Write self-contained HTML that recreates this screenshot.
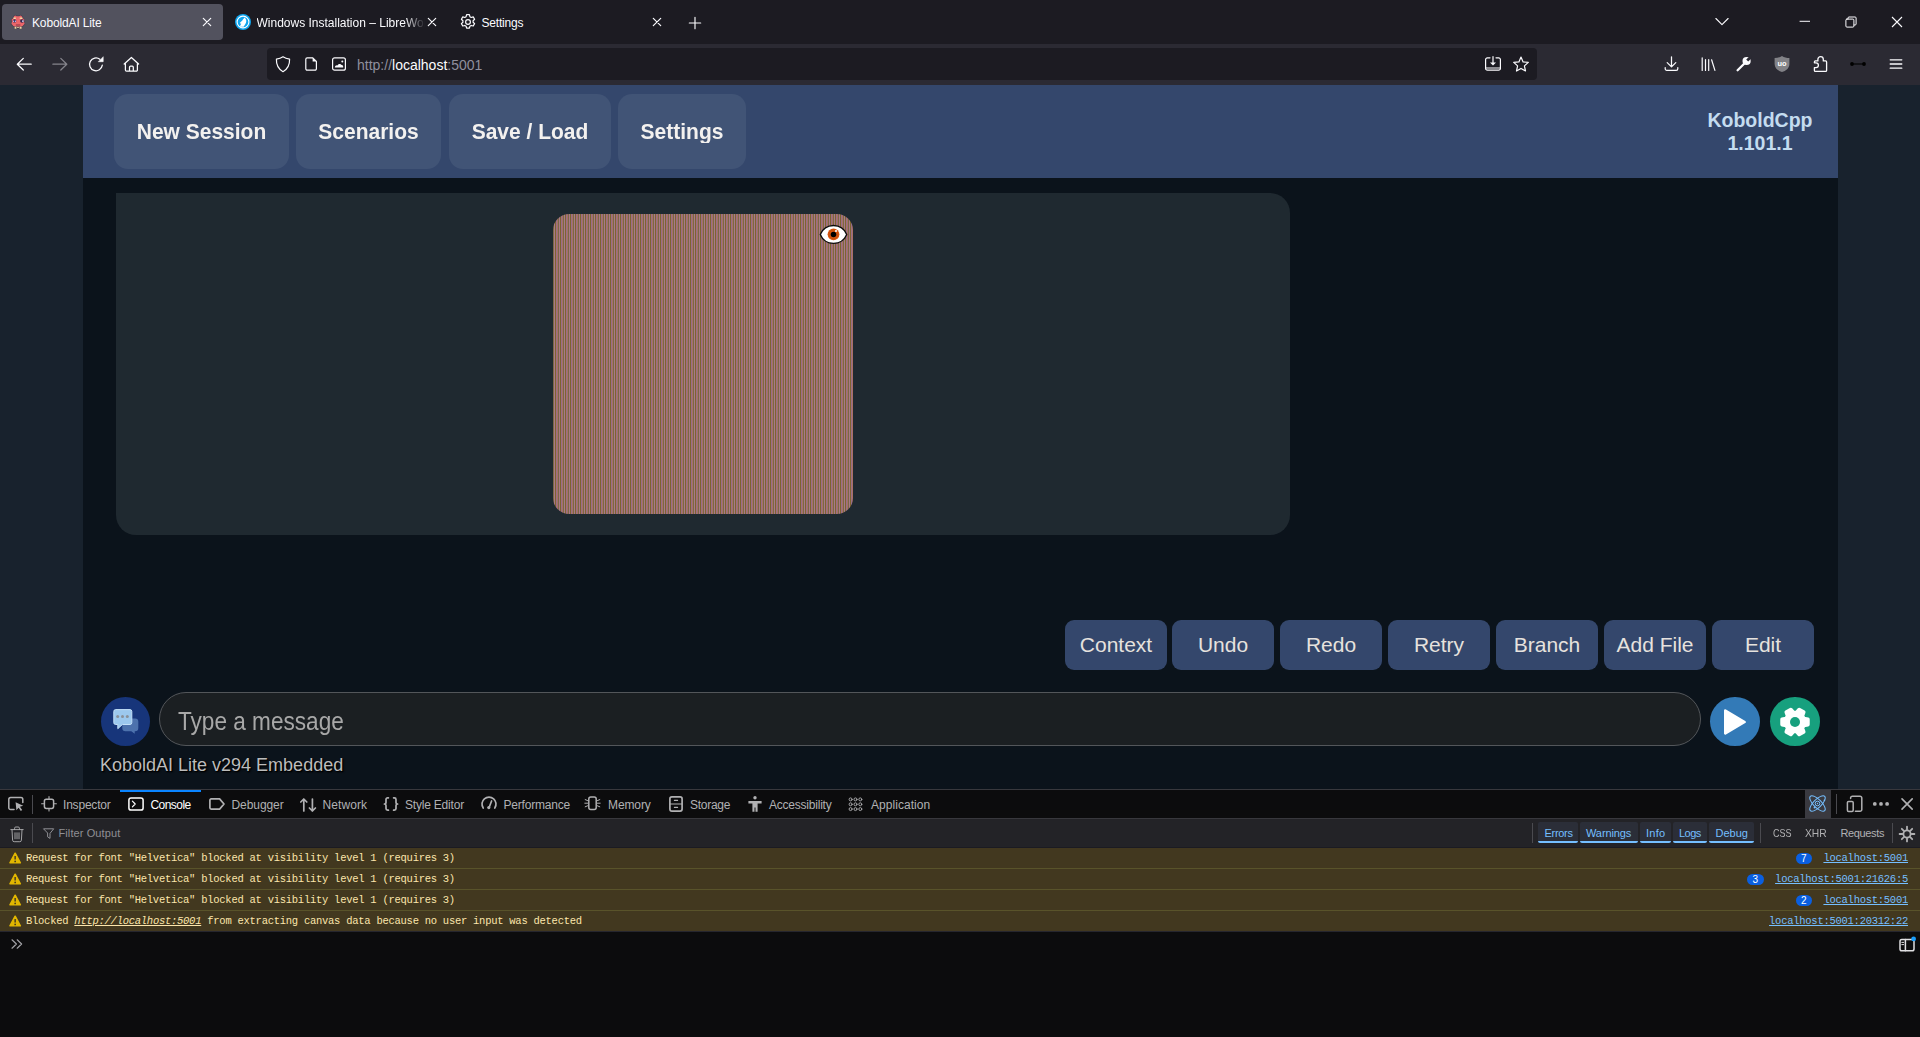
<!DOCTYPE html>
<html lang="en">
<head>
<meta charset="utf-8">
<title>KoboldAI Lite</title>
<style>
*{box-sizing:border-box;margin:0;padding:0}
html,body{width:1920px;height:1037px;overflow:hidden;background:#0c0c0d}
body{position:relative;font-family:"Liberation Sans",sans-serif;color:#fbfbfe}
.abs{position:absolute}
svg{display:block;position:absolute;overflow:visible}
/* ---------- browser chrome ---------- */
#tabbar{left:0;top:0;width:1920px;height:44px;background:#1c1b22}
#navbar{left:0;top:44px;width:1920px;height:41px;background:#2b2a33}
.tab{position:absolute;top:4px;height:36px;border-radius:4px}
.tab.sel{left:2px;width:221px;background:#52525e}
.tabtxt{position:absolute;top:1px;height:44px;line-height:44px;font-size:12px;color:#fbfbfe;white-space:nowrap}
#urlbar{left:267px;top:48px;width:1270px;height:32px;border-radius:4px;background:#1c1b22}
#urltxt{left:357px;top:49px;height:32px;line-height:32px;font-size:14px;color:#8f8f9d;white-space:nowrap}
#urltxt b{font-weight:normal;color:#fbfbfe}
.ic{fill:none;stroke:#fbfbfe;stroke-width:1.25;stroke-linecap:round;stroke-linejoin:round}
.icf{fill:#fbfbfe;stroke:none}
/* ---------- page ---------- */
#page{left:0;top:85px;width:1920px;height:704px;background:#18222d}
#main{left:83px;top:0;width:1755px;height:704px;background:#0b131b}
#topnav{left:0;top:0;width:1755px;height:93px;background:#34476c}
.nbtn{position:absolute;top:9px;height:75px;border-radius:14px;background:#415476;color:#f3f1ef;font-weight:bold;font-size:21px;line-height:74.6px;text-align:center;white-space:nowrap}
.nbtn span{display:block;transform:scaleY(1.08)}
#ver{left:1577px;top:24px;width:200px;text-align:center;font-weight:bold;font-size:19.5px;line-height:23px;color:#c4dcf0}
#chat{left:33px;top:108px;width:1174px;height:342px;border-radius:0 20px 20px 20px;background:#1f2930}
#pic{left:470px;top:129px;width:300px;height:300px;border-radius:16px;background:#946e62 repeating-linear-gradient(90deg,#786848 0,#786848 1px,#aa7a86 1px,#aa7a86 2px,#80622f 2px,#80622f 3px,#987089 3px,#987089 4px,#aa7064 4px,#aa7064 5px)}
.abtn{position:absolute;top:535px;width:102px;height:50px;border-radius:9px;background:#34476c;color:#e6e2de;font-size:21px;line-height:50px;text-align:center;white-space:nowrap}
#inp{left:76px;top:607px;width:1542px;height:54px;border-radius:27px;background:#1b1f22;border:1px solid #53565a}
#ph{left:95px;top:607px;height:60px;line-height:60px;font-size:22.6px;color:#a8a8a8;transform:scaleY(1.13);white-space:nowrap}
.circ{position:absolute;width:50px;height:49.4px;border-radius:50%;margin-top:.7px}
#foot{left:17px;top:668px;font-size:18px;line-height:24px;color:#bcbcbc;text-shadow:1px 1px 1px #000,1px 1px 2px #000;white-space:nowrap}
/* ---------- devtools ---------- */
#dt{left:0;top:789px;width:1920px;height:248px;background:#0c0c0d}
#dttop{left:0;top:0;width:1920px;height:1px;background:#38383d}
#dtbar{left:0;top:1px;width:1920px;height:29px;background:#0c0c0d;border-bottom:1px solid #38383d}
#dtsel{left:120px;top:1px;width:81px;height:2px;background:#0a84ff}
#dtfilter{left:0;top:30px;width:1920px;height:29px;background:#232327;border-bottom:1px solid #1b1b22}
.dtt{position:absolute;top:2px;height:28px;line-height:28px;font-size:12px;color:#b1b1b3;white-space:nowrap}
.dti{fill:none;stroke:#b1b1b3;stroke-width:1.5;stroke-linecap:round;stroke-linejoin:round}
.dtf{fill:#b1b1b3;stroke:none}
.sep{position:absolute;width:1px;background:#4a4a4f}
.row{position:absolute;left:0;width:1920px;height:21px;background:#42381f;border-bottom:1px solid #59532a}
.msg{position:absolute;left:26px;top:0;height:20px;line-height:20px;font-family:"Liberation Mono",monospace;font-size:10.5px;letter-spacing:-.26px;color:#fce6ac;white-space:nowrap}
.loc{position:absolute;right:12px;top:0;height:20px;line-height:20px;font-family:"Liberation Mono",monospace;font-size:10.5px;letter-spacing:-.26px;color:#75bfff;text-decoration:underline;white-space:nowrap}
.badge{position:absolute;top:5px;height:11px;width:15.5px;border-radius:6px;background:#0a5fe0;color:#fff;font-family:"Liberation Sans",sans-serif;font-size:10px;line-height:12px;text-align:center}
.fl{position:absolute;top:30px;height:28px;line-height:28px;font-size:11px;color:#b1b1b3;white-space:nowrap}
.fb{position:absolute;top:33px;height:21px;border-radius:2px;background:#2b2e38;border-bottom:2px solid #75bfff}
.fl.on{color:#75bfff}
.warn{position:absolute;left:9px;top:4px}
</style>
</head>
<body>
<div id="tabbar" class="abs">
  <div class="tab sel"></div>
  <div class="tabtxt" style="left:32px;letter-spacing:-.14px">KoboldAI Lite</div>
  <div class="tabtxt" style="left:256.5px;width:168px;overflow:hidden;-webkit-mask-image:linear-gradient(90deg,#000 88%,transparent 100%);mask-image:linear-gradient(90deg,#000 88%,transparent 100%)">Windows Installation – LibreWolf</div>
  <div class="tabtxt" style="left:481.5px;letter-spacing:-.21px">Settings</div>
</div>
<div id="navbar" class="abs"></div>
<div id="urlbar" class="abs"></div>
<div id="urltxt" class="abs">http://<b>localhost</b>:5001</div>


<!-- tab 1 favicon (kobold face) -->
<svg style="left:10px;top:14px" width="16" height="16" viewBox="0 0 16 16">
  <path d="M3.6 1.8 L5.2 .8 L6.6 1.6 H9 L10.6 .8 L12.2 1.8 L12.8 3.6 L15 5.2 L14.6 7.6 L15.2 10 L13 12.6 L11.8 12.8 L11.6 15 H4.2 L4 12.8 L2.8 12.6 L.8 10 L1.4 7.6 L1 5.2 L3 3.6Z" fill="#3a3446" opacity=".55"/>
  <path d="M4 2.2 L5.2 1.4 L6.6 2.2 H9.2 L10.6 1.4 L11.8 2.2 L12.4 4 L14.4 5.4 L14 7.6 L14.6 9.8 L12.6 12 L11 12.4 H5 L3.4 12 L1.4 9.8 L2 7.6 L1.6 5.4 L3.6 4Z" fill="#ec666a"/>
  <path d="M3.4 3.4 H5.8 L6 4.8 L3.6 5.2Z M9.8 3.4 H12.4 L12.2 5.2 L9.6 4.8Z" fill="#f6d8a4"/>
  <ellipse cx="4.5" cy="6.9" rx="1.8" ry="1.6" fill="#2e2552"/><ellipse cx="12" cy="7" rx="1.9" ry="1.7" fill="#2e2552"/>
  <path d="M3 6.6 h1.2 v1.4 h-1.2z M5 6.6 h1 v1.4 h-1z" fill="#b4b2e6"/><path d="M12.2 6.2 h1.4 v1.8 h-1.4z" fill="#d6d4f2"/>
  <path d="M5.8 10 H10.4 V12.2 H5.8Z" fill="#b84c56"/>
  <path d="M4.6 12.8 H6.4 V14.8 H4.6Z M9.6 12.8 H11.6 V14.8 H9.6Z M7 13.2 H9 V14 H7Z" fill="#f1d3a2"/>
</svg>
<!-- tab close buttons -->
<svg class="ic" style="left:203px;top:18px;stroke-width:1.2" width="8" height="8" viewBox="0 0 8 8"><path d="M.3 .3 L7.7 7.7 M7.7 .3 L.3 7.7"/></svg>
<svg class="ic" style="left:428px;top:18px;stroke-width:1.2" width="8" height="8" viewBox="0 0 8 8"><path d="M.3 .3 L7.7 7.7 M7.7 .3 L.3 7.7"/></svg>
<svg class="ic" style="left:653px;top:18px;stroke-width:1.2" width="8" height="8" viewBox="0 0 8 8"><path d="M.3 .3 L7.7 7.7 M7.7 .3 L.3 7.7"/></svg>
<!-- librewolf favicon -->
<svg style="left:235px;top:14px" width="16" height="16" viewBox="0 0 16 16">
  <circle cx="8" cy="8" r="8" fill="#10a5ee"/>
  <circle cx="8" cy="8" r="5.9" fill="none" stroke="#fff" stroke-width="1.1"/>
  <path d="M9.6 3.4 L10.8 5 C11.6 6.4 11.4 8.6 10.2 10.2 L8.6 12.8 H4.9 C5.2 11.6 5.6 10.6 6.3 9.8 C5.6 9.7 5.1 9.5 4.7 9.1 L7.3 6.6 C7.9 5.2 8.6 4.2 9.6 3.4Z" fill="#fff"/>
</svg>
<!-- settings tab gear -->
<svg class="ic" style="left:460px;top:14px;stroke-width:1.2" width="16" height="16" viewBox="0 0 16 16">
  <path d="M6.6 .7 h2.8 l.5 2 l1.3 .75 l2 -.6 l1.4 2.4 l-1.5 1.45 v1.5 l1.5 1.45 l-1.4 2.4 l-2 -.6 l-1.3 .75 l-.5 2 h-2.8 l-.5 -2 l-1.3 -.75 l-2 .6 l-1.4 -2.4 l1.5 -1.45 v-1.5 l-1.5 -1.45 l1.4 -2.4 l2 .6 l1.3 -.75z"/>
  <circle cx="8" cy="8" r="2.4"/>
</svg>
<!-- new tab plus -->
<svg class="ic" style="left:689px;top:17px;stroke-width:1.15" width="12" height="12" viewBox="0 0 12 12"><path d="M6 .3 V11.7 M.3 6 H11.7"/></svg>
<!-- window controls -->
<svg class="ic" style="left:1715px;top:17px;stroke-width:1.1" width="14" height="9" viewBox="0 0 14 9"><path d="M.9 1.5 L7 7.6 L13.1 1.5"/></svg>
<svg class="ic" style="left:1799px;top:20px;stroke-width:1;stroke-linecap:butt" width="12" height="2" viewBox="0 0 12 2"><path d="M.6 1.3 H11"/></svg>
<svg class="ic" style="left:1845px;top:16px;stroke-width:1" width="12" height="12" viewBox="0 0 12 12"><rect x=".9" y="3.1" width="8" height="8" rx="1"/><path d="M3 3 V2 a1 1 0 0 1 1 -1 h6.1 a1 1 0 0 1 1 1 v6 a1 1 0 0 1 -1 1 h-1"/></svg>
<svg class="ic" style="left:1891px;top:16px;stroke-width:1.1;stroke-linecap:butt" width="12" height="12" viewBox="0 0 12 12"><path d="M1 1 L11 11 M11 1 L1 11"/></svg>
<!-- nav buttons -->
<svg class="ic" style="left:16px;top:56px" width="16" height="16" viewBox="0 0 16 16"><path d="M15.2 8.2 H1.4 M7.3 2.4 L1.3 8.2 L7.3 14"/></svg>
<svg class="ic" style="left:52px;top:56px;stroke:#85848c" width="16" height="16" viewBox="0 0 16 16"><path d="M.9 8.2 H14.7 M8.8 2.4 L14.8 8.2 L8.8 14"/></svg>
<svg class="ic" style="left:88px;top:56px" width="16" height="16" viewBox="0 0 16 16"><path d="M14.3 9.2 A6.4 6.4 0 1 1 11.9 3.3"/><path class="icf" d="M15.2 1.1 V5.7 H10.6z" style="stroke:#fbfbfe;stroke-width:.6"/></svg>
<svg class="ic" style="left:123px;top:56px" width="17" height="16" viewBox="0 0 17 16"><path d="M1.2 8 L8.4 1.5 L15.6 8 M2.4 7.4 V14 a1.2 1.2 0 0 0 1.2 1.2 H13.2 a1.2 1.2 0 0 0 1.2 -1.2 V7.4 M6.5 15 V11.2 a1 1 0 0 1 1 -1 h1.8 a1 1 0 0 1 1 1 V15"/></svg>
<!-- urlbar icons -->
<svg class="ic" style="left:275px;top:56px;stroke-width:1.2" width="16" height="17" viewBox="0 0 16 17"><path d="M8 .8 C6 2.3 3.6 2.9 1.4 3.1 C1.2 8.6 3 13 8 15.7 C13 13 14.8 8.6 14.6 3.1 C12.4 2.9 10 2.3 8 .8Z"/></svg>
<svg class="ic" style="left:304px;top:56px;stroke-width:1.2" width="14" height="16" viewBox="0 0 14 16"><path d="M3.2 1.8 H8.8 L12.4 5.4 V12.8 a1.4 1.4 0 0 1 -1.4 1.4 H3.2 a1.4 1.4 0 0 1 -1.4 -1.4 V3.2 a1.4 1.4 0 0 1 1.4 -1.4z"/><path class="icf" d="M8.6 1.8 V5.6 H12.4z"/></svg>
<svg class="ic" style="left:331px;top:56px;stroke-width:1.2" width="16" height="16" viewBox="0 0 16 16"><rect x="1.6" y="1.8" width="12.8" height="12.4" rx="2"/><path class="icf" d="M3.8 11.6 C4 9.6 5.4 8.8 6.6 9.4 C7.4 7.6 9.6 7.4 10.6 9 C11.8 8.8 12.4 10 12.2 11.6z"/><circle class="icf" cx="11.3" cy="5.4" r="1"/></svg>
<svg class="ic" style="left:1485px;top:56px;stroke-width:1.2" width="16" height="16" viewBox="0 0 16 16"><path d="M5 1.8 H2.4 a1.8 1.8 0 0 0 -1.8 1.8 V12.4 a1.8 1.8 0 0 0 1.8 1.8 H13.6 a1.8 1.8 0 0 0 1.8 -1.8 V3.6 a1.8 1.8 0 0 0 -1.8 -1.8 H11 M.6 12 H15.4 M8 .6 V7"/><path class="icf" d="M5 6.4 H11 L8 9.4z"/></svg>
<svg class="ic" style="left:1513px;top:56px;stroke-width:1.2" width="16" height="17" viewBox="0 0 16 17"><path d="M8 1.1 L10.1 5.9 L15.3 6.4 L11.4 9.9 L12.5 15 L8 12.4 L3.5 15 L4.6 9.9 L.7 6.4 L5.9 5.9Z"/></svg>
<!-- toolbar right icons -->
<svg class="ic" style="left:1664px;top:56px" width="16" height="16" viewBox="0 0 16 16"><path d="M7.5 .8 V10.6 M3.2 6.6 L7.5 10.9 L11.8 6.6 M1.2 11.6 V12.8 a1.6 1.6 0 0 0 1.6 1.6 H12.2 a1.6 1.6 0 0 0 1.6 -1.6 V11.6"/></svg>
<svg class="ic" style="left:1701px;top:56px;stroke-width:1.2" width="16" height="16" viewBox="0 0 16 16"><path d="M1.2 1.8 V14.4 M4.5 3.6 V14.4 M7.7 3.6 V14.4 M10.6 3.8 L13.9 14.4"/></svg>
<svg style="left:1736px;top:56px" width="16" height="16" viewBox="0 0 16 16"><path d="M1.6 14.2 L8.6 7.2" stroke="#fbfbfe" stroke-width="2.3" stroke-linecap="round" fill="none"/><circle cx="10.6" cy="5" r="4.1" fill="#fbfbfe"/><path d="M11.2 4.6 L15.6 .2" stroke="#2b2a33" stroke-width="2.8" fill="none"/></svg>
<svg style="left:1774px;top:56px" width="16" height="16" viewBox="0 0 16 16"><path d="M8 0 C6 1.4 3.2 2 .6 2.1 V8 C.6 12 4 15 8 16 C12 15 15.4 12 15.4 8 V2.1 C12.8 2 10 1.4 8 0Z" fill="#828287"/><text x="8" y="10.2" text-anchor="middle" font-family="Liberation Sans, sans-serif" font-weight="bold" font-size="7.4" fill="#fff">uo</text></svg>
<svg class="ic" style="left:1813px;top:56px;stroke-width:1.3" width="15" height="16" viewBox="0 0 15 16"><path d="M2.4 4.9 H4.9 V3.3 a2.7 2.7 0 0 1 5.4 0 V4.9 H12.6 a1 1 0 0 1 1 1 V14.4 a1 1 0 0 1 -1 1 H2.4 a1 1 0 0 1 -1 -1 V11.6 H3 a2.4 2.4 0 0 0 0 -4.8 H1.4 V5.9 a1 1 0 0 1 1 -1z"/></svg>
<svg style="left:1849px;top:60px" width="18" height="8" viewBox="0 0 18 8"><path d="M3 4 H15" stroke="#000" stroke-width="1.1"/><circle cx="3" cy="4" r="1.9" fill="#000"/><circle cx="15" cy="4" r="1.9" fill="#000"/></svg>
<svg class="ic" style="left:1889px;top:58px;stroke-width:1.3" width="14" height="12" viewBox="0 0 14 12"><path d="M1.2 1.8 H12.8 M1.2 6 H12.8 M1.2 10.2 H12.8"/></svg>

<div id="page" class="abs">
 <div id="main" class="abs">
  <div id="topnav" class="abs">
    <div class="nbtn" style="left:31px;width:175px"><span>New Session</span></div>
    <div class="nbtn" style="left:213px;width:145px"><span>Scenarios</span></div>
    <div class="nbtn" style="left:366px;width:162px"><span>Save / Load</span></div>
    <div class="nbtn" style="left:535px;width:128px"><span>Settings</span></div>
    <div id="ver" class="abs">KoboldCpp<br>1.101.1</div>
  </div>
  <div id="chat" class="abs"></div>
  <div id="pic" class="abs"></div>
  <div class="abtn" style="left:982px">Context</div>
  <div class="abtn" style="left:1089px">Undo</div>
  <div class="abtn" style="left:1197px">Redo</div>
  <div class="abtn" style="left:1305px">Retry</div>
  <div class="abtn" style="left:1413px">Branch</div>
  <div class="abtn" style="left:1521px">Add File</div>
  <div class="abtn" style="left:1629px">Edit</div>
  <div class="circ" style="left:17.9px;top:611.3px;width:49.2px;height:49.2px;background:#17357a"></div>
  <div id="inp" class="abs"></div>
  <div id="ph" class="abs">Type a message</div>
  <div class="circ" style="left:1627px;top:611px;background:#337ab7"></div>
  <div class="circ" style="left:1687px;top:611px;background:#17a07e"></div>

  <!-- eye overlay -->
  <svg style="left:735px;top:138px" width="31" height="22" viewBox="0 0 31 22">
    <path d="M2.3 11.4 A14.2 14.2 0 0 1 28.7 11.4 A14.2 14.2 0 0 1 2.3 11.4Z" fill="#fff" stroke="#0b0b0b" stroke-width="1.4" stroke-linejoin="round"/>
    <circle cx="15.5" cy="11.3" r="5.9" fill="#d9560f"/>
    <circle cx="15.5" cy="11.3" r="4.4" fill="none" stroke="#c24a08" stroke-width=".8"/>
    <circle cx="15.5" cy="11.5" r="2.8" fill="#000"/>
    <circle cx="18" cy="8.1" r="1" fill="#fff"/>
  </svg>
  <!-- chat bubbles -->
  <svg style="left:17.5px;top:611.5px" width="50" height="50" viewBox="0 0 50 50">
    <path d="M24.5 21.4 h9.6 a3.2 3.2 0 0 1 3.2 3.2 v6.4 a3.2 3.2 0 0 1 -3.2 3.2 h-.4 v2.6 l-3.4 -2.6 h-5.8 a3.2 3.2 0 0 1 -3.2 -3.2 v-6.4 a3.2 3.2 0 0 1 3.2 -3.2z" fill="#4d72ad"/>
    <path d="M14.6 12.6 h14.4 a1.8 1.8 0 0 1 1.8 1.8 v11.3 a1.8 1.8 0 0 1 -1.8 1.8 h-7.6 l-4.6 4.2 v-4.2 h-2.2 a1.8 1.8 0 0 1 -1.8 -1.8 v-11.3 a1.8 1.8 0 0 1 1.8 -1.8z" fill="#9cc8ee" stroke="#c4e0f8" stroke-width="1"/>
    <circle cx="16.7" cy="19.5" r="1.5" fill="#8a9099"/><circle cx="21.5" cy="19.5" r="1.5" fill="#8a9099"/><circle cx="26.3" cy="19.5" r="1.5" fill="#8a9099"/>
  </svg>
  <!-- play -->
  <svg style="left:1627px;top:611.5px" width="50" height="50" viewBox="0 0 50 50">
    <path d="M15.3 13.6 L34.6 25 L15.3 36.4Z" fill="#fff" stroke="#fff" stroke-width="2.6" stroke-linejoin="round"/>
  </svg>
  <!-- gear -->
  <svg style="left:1687px;top:611.5px" width="50" height="50" viewBox="0 0 50 50">
    <path d="M33.98 21.62 L37.94 22.38 L37.94 27.62 L33.98 28.38 L32.42 31.09 L33.74 34.89 L29.20 37.51 L26.56 34.47 L23.44 34.47 L20.80 37.51 L16.26 34.89 L17.58 31.09 L16.02 28.38 L12.06 27.62 L12.06 22.38 L16.02 21.62 L17.58 18.91 L16.26 15.11 L20.80 12.49 L23.44 15.53 L26.56 15.53 L29.20 12.49 L33.74 15.11 L32.42 18.91Z" fill="#fff" stroke="#fff" stroke-width="3.6" stroke-linejoin="round"/>
    <circle cx="25" cy="25" r="5" fill="#17a07e"/>
  </svg>
  <div id="foot" class="abs">KoboldAI Lite v294 Embedded</div>
 </div>
</div>

<div id="dt" class="abs">
  <div id="dttop" class="abs"></div>
  <div id="dtbar" class="abs"></div>
  <div id="dtsel" class="abs"></div>
  <div id="dtfilter" class="abs"></div>
  <!-- toolbar icons -->
  <svg class="dti" style="left:8px;top:7px" width="16" height="16" viewBox="0 0 16 16"><path d="M6 13.6 H2.6 a1.8 1.8 0 0 1 -1.8 -1.8 V3.4 a1.8 1.8 0 0 1 1.8 -1.8 H13 a1.8 1.8 0 0 1 1.8 1.8 V6.4"/><path class="dtf" d="M7.6 6.2 L15.2 9.8 L11.9 10.8 L14.2 14 L12.8 15 L10.6 11.8 L8.4 14.2Z"/></svg>
  <div class="sep" style="left:32px;top:6px;height:19px"></div>
  <svg class="dti" style="left:41px;top:7px" width="16" height="16" viewBox="0 0 16 16"><rect x="3.4" y="3.2" width="9.2" height="9.2" rx="1.8" style="stroke-width:1.5"/><path d="M8 .6 V3 M8 12.6 V15 M.6 7.8 H3 M13 7.8 H15.4" style="stroke-width:1.1"/></svg>
  <svg class="dti" style="left:128px;top:8px;stroke:#fff;stroke-width:1.5" width="16" height="14" viewBox="0 0 16 14"><rect x=".9" y=".9" width="14.2" height="12.2" rx="2.2"/><path d="M4.4 4.2 L7.2 7 L4.4 9.8" style="stroke-width:1.2"/></svg>
  <svg class="dti" style="left:209px;top:9px;stroke-width:1.7" width="16" height="12" viewBox="0 0 16 12"><path d="M2.2 .9 H10.6 L15 6 L10.6 11.1 H2.2 a1.3 1.3 0 0 1 -1.3 -1.3 V2.2 a1.3 1.3 0 0 1 1.3 -1.3z"/></svg>
  <svg class="dti" style="left:300px;top:9px;stroke-width:1.7" width="17" height="14" viewBox="0 0 17 14"><path d="M3.8 13 V1 M.8 4 L3.8 1 L6.8 4 M12.4 1 V13 M9.4 10 L12.4 13 L15.4 10"/></svg>
  <svg class="dti" style="left:383px;top:8px;stroke-width:1.7" width="16" height="15" viewBox="0 0 16 15"><path d="M5.4 .8 H4.6 a1.6 1.6 0 0 0 -1.6 1.6 V5.4 a1.6 1.6 0 0 1 -1.6 1.6 a1.6 1.6 0 0 1 1.6 1.6 V11.6 a1.6 1.6 0 0 0 1.6 1.6 H5.4 M10.6 .8 H11.4 a1.6 1.6 0 0 1 1.6 1.6 V5.4 a1.6 1.6 0 0 0 1.6 1.6 a1.6 1.6 0 0 0 -1.6 1.6 V11.6 a1.6 1.6 0 0 1 -1.6 1.6 H10.6"/></svg>
  <svg class="dti" style="left:481px;top:7px;stroke-width:1.7" width="16" height="14" viewBox="0 0 16 14"><path d="M2.2 12 A7 7 0 1 1 13.8 12 M10.6 5 L8.2 11.2"/><circle class="dtf" cx="7.8" cy="11.6" r="1.6"/></svg>
  <svg class="dti" style="left:584px;top:7px" width="17" height="15" viewBox="0 0 17 15"><rect x="4.8" y="1" width="7.4" height="12.6" rx="2" style="stroke-width:1.5"/><path d="M1.2 3.6 L3.6 4.6 M.8 7.2 H3.6 M1.2 10.8 L3.6 9.8 M15.8 3.6 L13.4 4.6 M16.2 7.2 H13.4 M15.8 10.8 L13.4 9.8" style="stroke-width:1"/></svg>
  <svg class="dti" style="left:669px;top:7px;stroke-width:1.7" width="14" height="16" viewBox="0 0 14 16"><rect x=".9" y=".9" width="12.2" height="14.2" rx="2"/><path d="M.9 8 H13.1 M5.4 4.4 H8.6 M5.4 11.4 H8.6" style="stroke-width:1.1"/></svg>
  <svg style="left:748px;top:7px" width="14" height="16" viewBox="0 0 14 16"><circle cx="7" cy="1.7" r="1.7" fill="#b1b1b3"/><path d="M.4 5 H13.6 V7.6 H9.6 V15.8 H7.5 V11.4 H6.5 V15.8 H4.4 V7.6 H.4Z" fill="#b1b1b3"/></svg>
  <svg class="dti" style="left:848px;top:8px;stroke-width:.9" width="16" height="15" viewBox="0 0 16 15"><circle cx="2.6" cy="2.4" r="1.5"/><circle cx="7.5" cy="2.4" r="1.5"/><circle cx="12.3" cy="2.4" r="1.5"/><circle cx="2.6" cy="7.3" r="1.5"/><circle cx="7.5" cy="7.3" r="1.5"/><circle cx="12.3" cy="7.3" r="1.5"/><circle cx="2.6" cy="12.1" r="1.5"/><circle cx="7.5" cy="12.1" r="1.5"/><circle cx="12.3" cy="12.1" r="1.5"/></svg>
  <div class="dtt" style="left:63px;letter-spacing:-0.2px">Inspector</div><div class="dtt" style="left:150.5px;color:#fff;letter-spacing:-0.55px">Console</div><div class="dtt" style="left:231.5px;letter-spacing:-0.07px">Debugger</div><div class="dtt" style="left:322.5px;letter-spacing:0.1px">Network</div><div class="dtt" style="left:405px;letter-spacing:-0.2px">Style Editor</div><div class="dtt" style="left:503.5px;letter-spacing:-0.2px">Performance</div><div class="dtt" style="left:608px;letter-spacing:-0.1px">Memory</div><div class="dtt" style="left:690px;letter-spacing:-0.27px">Storage</div><div class="dtt" style="left:769px;letter-spacing:-0.22px">Accessibility</div><div class="dtt" style="left:871px;letter-spacing:0.04px">Application</div>
  <!-- toolbar right -->
  <div class="abs" style="left:1805px;top:1px;width:26px;height:28px;background:#3a3a40"></div>
  <svg style="left:1809.2px;top:6px;fill:none;stroke:#75bfff;stroke-width:1" width="17" height="17" viewBox="0 0 17 17"><ellipse cx="8.5" cy="8.5" rx="4" ry="10.2" transform="rotate(-45 8.5 8.5)"/><ellipse cx="8.5" cy="8.5" rx="4" ry="10.2" transform="rotate(45 8.5 8.5)"/><circle cx="8.5" cy="8.5" r="2.3"/><circle cx="8.5" cy="8.5" r=".7" fill="#75bfff" stroke="none"/><circle cx="5.6" cy="12.6" r="1" fill="#75bfff" stroke="none"/><circle cx="15.4" cy="5.4" r=".8" fill="#75bfff" stroke="none"/></svg>
  <div class="sep" style="left:1836px;top:5px;height:20px"></div>
  <svg class="dti" style="left:1846px;top:6px;stroke-width:1.5" width="17" height="18" viewBox="0 0 17 18"><path d="M4.6 3.6 V3 a1.8 1.8 0 0 1 1.8 -1.8 H14 a1.8 1.8 0 0 1 1.8 1.8 V14.4 a1.8 1.8 0 0 1 -1.8 1.8 H9.4"/><rect x="1.4" y="6.4" width="5.8" height="10" rx="1.2"/></svg>
  <svg style="left:1872px;top:12px" width="18" height="6" viewBox="0 0 18 6"><circle cx="2.8" cy="2.9" r="1.9" fill="#b1b1b3"/><circle cx="9" cy="2.9" r="1.9" fill="#b1b1b3"/><circle cx="15.1" cy="2.9" r="1.9" fill="#b1b1b3"/></svg>
  <svg class="dti" style="left:1901px;top:9px;stroke-width:1.6" width="12" height="12" viewBox="0 0 12 12"><path d="M1 .9 L11.2 11.1 M11.2 .9 L1 11.1"/></svg>
  <!-- filter bar -->
  <svg class="dti" style="left:10px;top:36.5px;stroke-width:1.5" width="14" height="17" viewBox="0 0 14 17"><path d="M.8 3.6 H13.2 M4.6 3.4 V2.2 a1.2 1.2 0 0 1 1.2 -1.2 H8.2 a1.2 1.2 0 0 1 1.2 1.2 V3.4 M2 3.8 L2.6 14.2 a1.6 1.6 0 0 0 1.6 1.5 H9.8 a1.6 1.6 0 0 0 1.6 -1.5 L12 3.8 M5 6.8 V12.8 M7 6.8 V12.8 M9 6.8 V12.8" style="stroke-width:.9"/></svg>
  <div class="sep" style="left:32px;top:34px;height:20px"></div>
  <svg class="dti" style="left:43px;top:39px;stroke:#8f8f94;stroke-width:1" width="12" height="12" viewBox="0 0 12 12"><path d="M.9 .8 H10.7 L7 5.4 V10.4 L4.6 8.8 V5.4Z"/></svg>
  <div class="fl" style="left:58.5px;color:#8f8f94;letter-spacing:0.1px">Filter Output</div>
  <div class="sep" style="left:1532px;top:34px;height:20px"></div>
  <div class="fb" style="left:1538px;width:40px"></div><div class="fb" style="left:1580px;width:58px"></div><div class="fb" style="left:1640px;width:31px"></div><div class="fb" style="left:1673px;width:34px"></div><div class="fb" style="left:1709px;width:45px"></div>
  <div class="fl on" style="left:1544.5px;letter-spacing:-0.3px">Errors</div><div class="fl on" style="left:1586px;letter-spacing:-0.1px">Warnings</div><div class="fl on" style="left:1646px;letter-spacing:0.25px">Info</div><div class="fl on" style="left:1679px;letter-spacing:-0.5px">Logs</div><div class="fl on" style="left:1715.5px;letter-spacing:0.0px">Debug</div>
  <div class="sep" style="left:1760px;top:34px;height:20px"></div>
  <div class="fl" style="left:1773px;transform:scaleX(.82);transform-origin:0 50%">CSS</div><div class="fl" style="left:1805px;transform:scaleX(.935);transform-origin:0 50%">XHR</div><div class="fl" style="left:1840.5px;letter-spacing:-0.36px">Requests</div>
  <div class="sep" style="left:1892px;top:34px;height:20px"></div>
  <svg class="dti" style="left:1899px;top:37px;stroke-width:1.8" width="16" height="16" viewBox="0 0 16 16"><circle cx="8" cy="8" r="3.6"/><path d="M8 .6 V3.4 M8 12.6 V15.4 M.6 8 H3.4 M12.6 8 H15.4 M2.8 2.8 L4.8 4.8 M11.2 11.2 L13.2 13.2 M13.2 2.8 L11.2 4.8 M4.8 11.2 L2.8 13.2"/></svg>
  <div class="row" style="top:59px"><svg class="warn" width="12.3" height="12.3" viewBox="0 0 13 13"><path d="M6.5 1.3 L12 11.4 H1 Z" fill="#e2b700" stroke="#e2b700" stroke-width="1.6" stroke-linejoin="round"/><path d="M6.5 4.2 V8" stroke="#42381f" stroke-width="1.5" fill="none"/><circle cx="6.5" cy="10" r=".9" fill="#42381f"/></svg><div class="msg">Request for font "Helvetica" blocked at visibility level 1 (requires 3)</div><div class="badge" style="left:1796px">7</div><div class="loc">localhost:5001</div></div>
  <div class="row" style="top:80px"><svg class="warn" width="12.3" height="12.3" viewBox="0 0 13 13"><path d="M6.5 1.3 L12 11.4 H1 Z" fill="#e2b700" stroke="#e2b700" stroke-width="1.6" stroke-linejoin="round"/><path d="M6.5 4.2 V8" stroke="#42381f" stroke-width="1.5" fill="none"/><circle cx="6.5" cy="10" r=".9" fill="#42381f"/></svg><div class="msg">Request for font "Helvetica" blocked at visibility level 1 (requires 3)</div><div class="badge" style="left:1747px;width:16.8px">3</div><div class="loc">localhost:5001:21626:5</div></div>
  <div class="row" style="top:101px"><svg class="warn" width="12.3" height="12.3" viewBox="0 0 13 13"><path d="M6.5 1.3 L12 11.4 H1 Z" fill="#e2b700" stroke="#e2b700" stroke-width="1.6" stroke-linejoin="round"/><path d="M6.5 4.2 V8" stroke="#42381f" stroke-width="1.5" fill="none"/><circle cx="6.5" cy="10" r=".9" fill="#42381f"/></svg><div class="msg">Request for font "Helvetica" blocked at visibility level 1 (requires 3)</div><div class="badge" style="left:1796px">2</div><div class="loc">localhost:5001</div></div>
  <div class="row" style="top:122px;height:20px;border-bottom:0"><svg class="warn" width="12.3" height="12.3" viewBox="0 0 13 13"><path d="M6.5 1.3 L12 11.4 H1 Z" fill="#e2b700" stroke="#e2b700" stroke-width="1.6" stroke-linejoin="round"/><path d="M6.5 4.2 V8" stroke="#42381f" stroke-width="1.5" fill="none"/><circle cx="6.5" cy="10" r=".9" fill="#42381f"/></svg><div class="msg">Blocked <i style="text-decoration:underline">http://localhost:5001</i> from extracting canvas data because no user input was detected</div><div class="loc">localhost:5001:20312:22</div></div>
  <div class="abs" style="left:0;top:142px;width:1920px;height:1px;background:#26262e"></div>
  <svg class="dti" style="left:11px;top:150px;stroke:#a2a2a6;stroke-width:1.2" width="12" height="10" viewBox="0 0 12 10"><path d="M1 .8 L5.4 5 L1 9.2 M6.2 .8 L10.6 5 L6.2 9.2"/></svg>
  <svg class="dti" style="left:1899px;top:148px;stroke-width:1.5;stroke:#e0e0e2" width="17" height="15" viewBox="0 0 17 15"><rect x="1" y="2.6" width="14" height="11.2" rx="1.8"/><path d="M6.4 2.6 V13.8"/><path d="M2.8 5.4 H4.6 M2.8 7.6 H4.6" style="stroke-width:1"/><circle cx="14.6" cy="1.9" r="2.4" fill="#1a9dfb" stroke="none"/></svg>
</div>
</body>
</html>
